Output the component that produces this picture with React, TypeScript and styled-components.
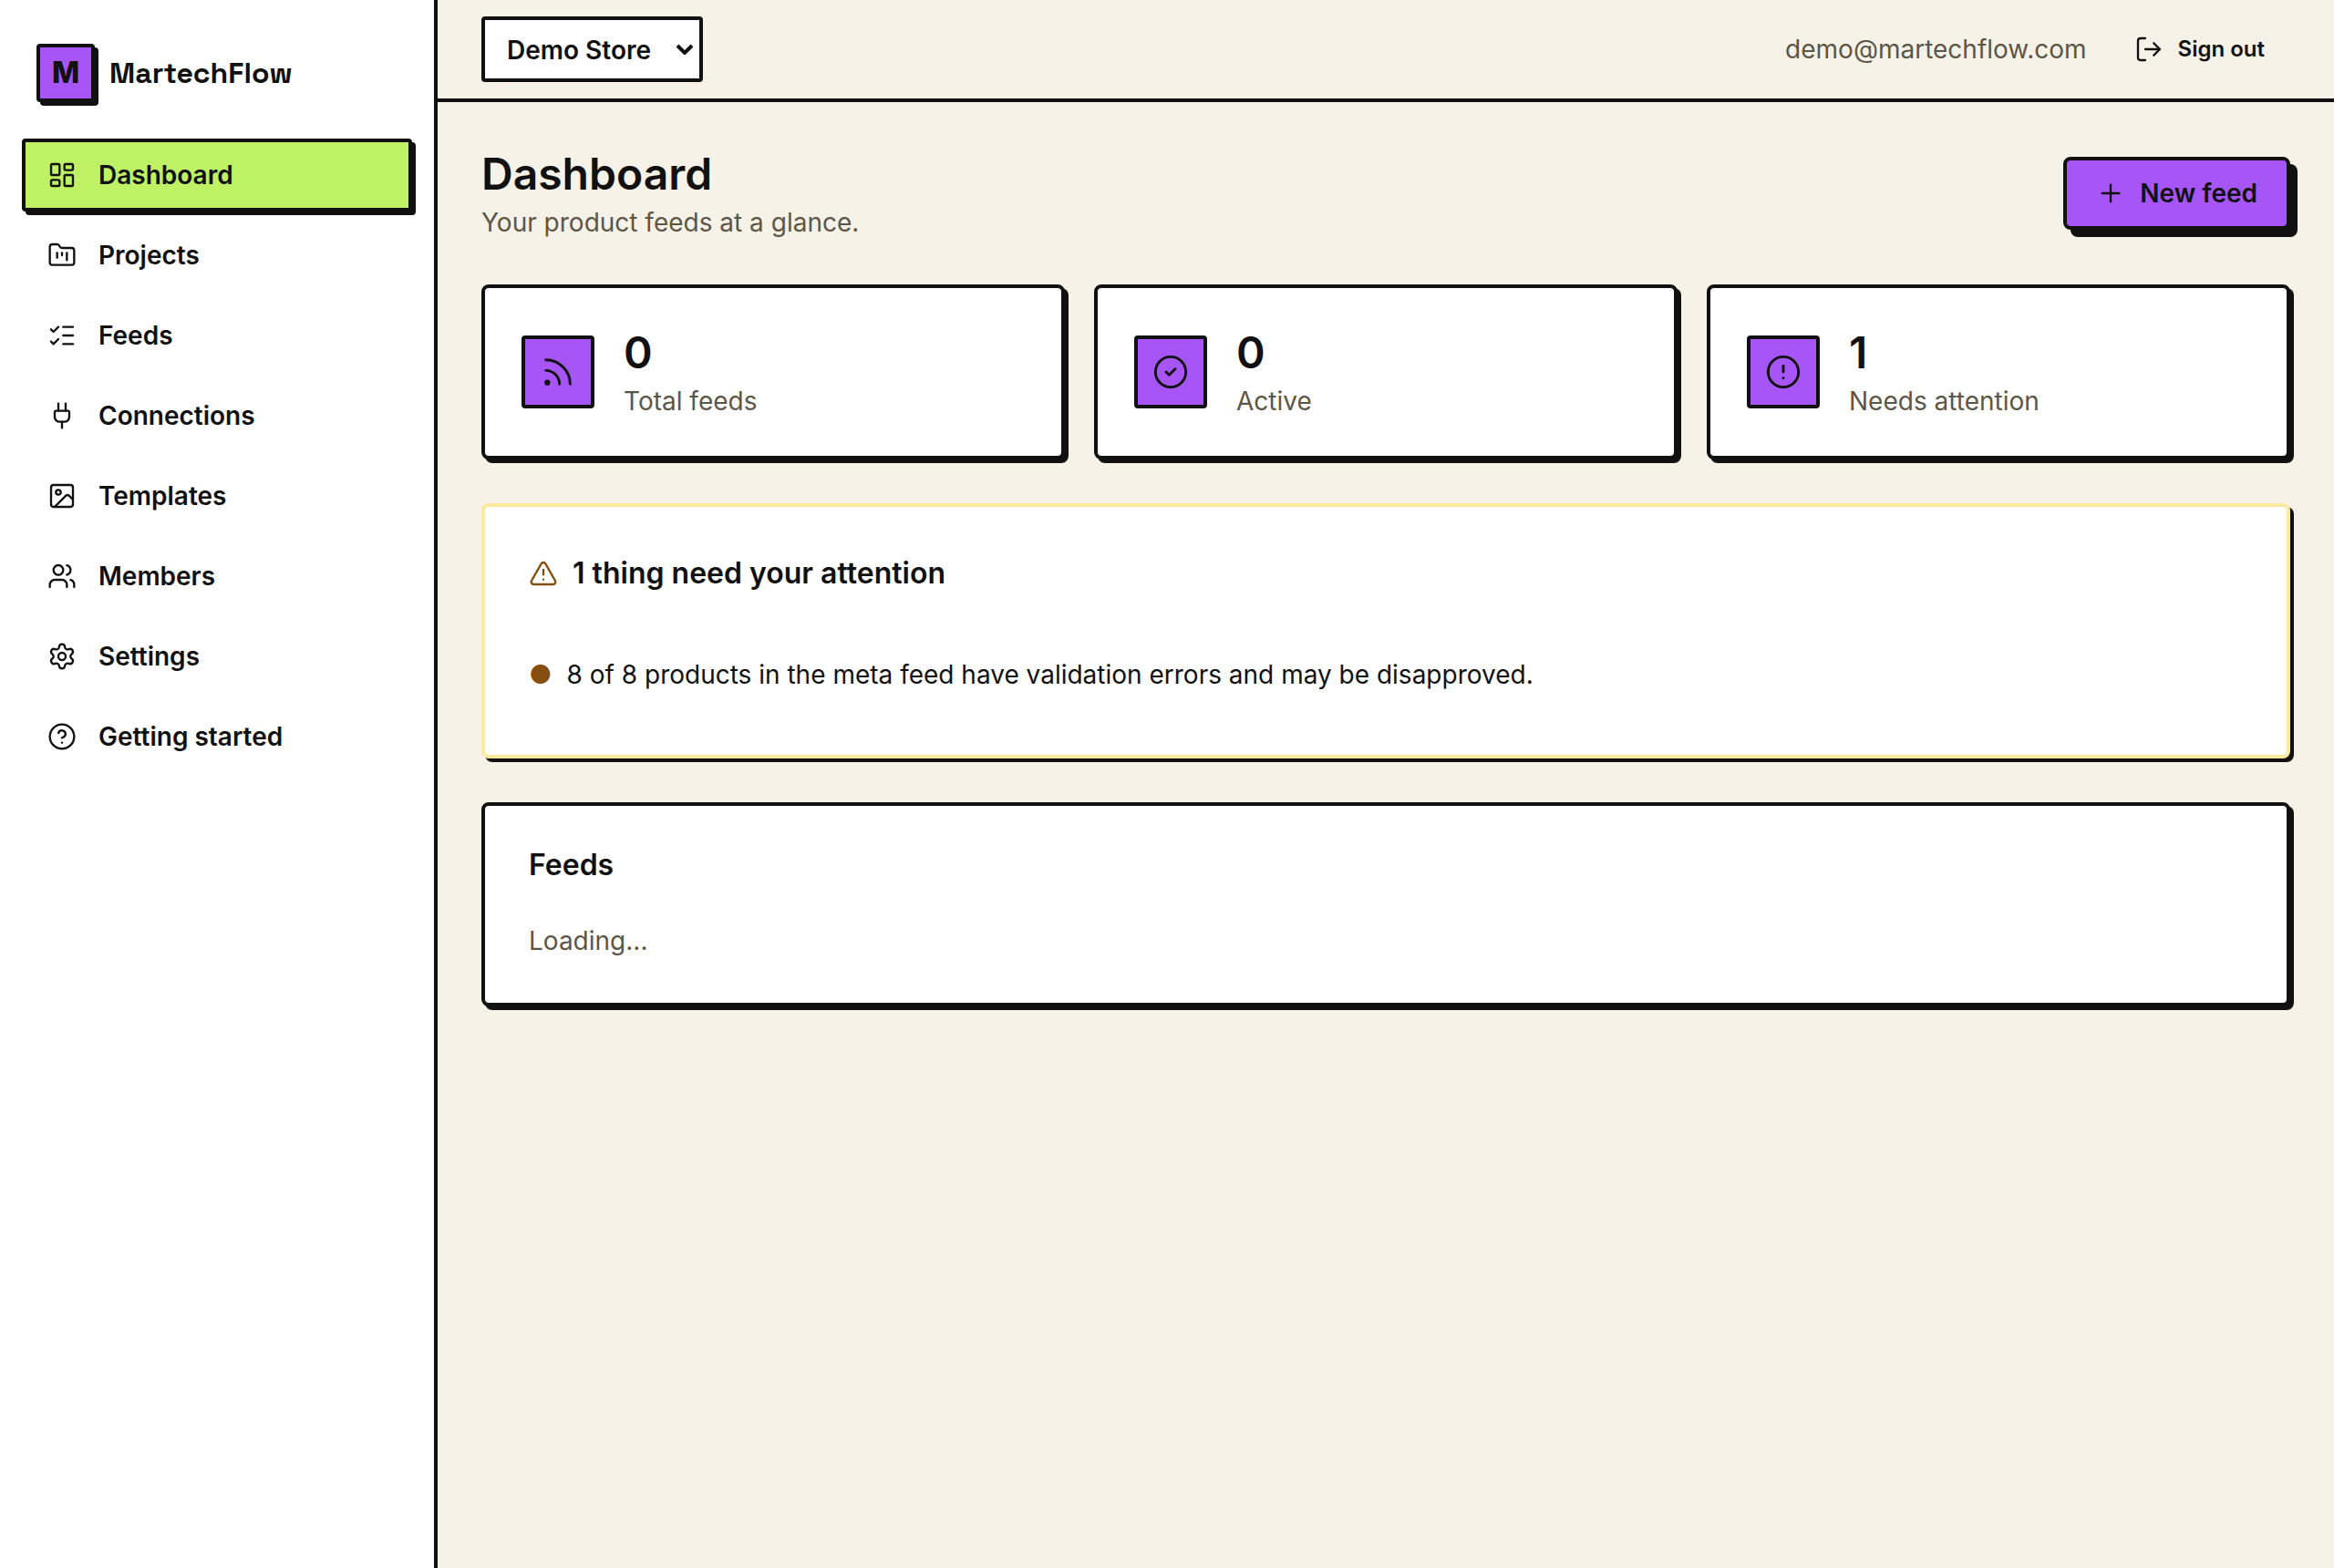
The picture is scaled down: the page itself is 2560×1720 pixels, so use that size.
import React from "react";
import styled, { createGlobalStyle } from "styled-components";
import {
  CircleAlert,
  CircleCheck,
  CircleHelp,
  FolderKanban,
  Image,
  LayoutDashboard,
  ListChecks,
  LogOut,
  Plug,
  Plus,
  Rss,
  Settings,
  TriangleAlert,
  Users,
  type LucideIcon,
} from "lucide-react";

const ink = "#111111";
const paper = "#f7f2e7";
const white = "#ffffff";
const purple = "#a855f7";
const lime = "#bef264";
const muted = "#5c5647";
const warning = "#854d0e";
const warningBorder = "#fdea9e";
const bodyFont = 'Inter, "Liberation Sans", sans-serif';

const GlobalStyle = createGlobalStyle`
  *, *::before, *::after { box-sizing: border-box; }
  body {
    margin: 0;
    background: ${paper};
    color: ${ink};
    font-family: ${bodyFont};
    font-size: 28px;
    line-height: 40px;
  }
  h1, h2, p, ul { margin: 0; padding: 0; }
  ul { list-style: none; }
  button, select { font: inherit; color: inherit; }
  svg { flex: none; }
`;

const Shell = styled.div`
  display: grid;
  grid-template-columns: 480px minmax(0, 1fr);
  min-height: 100vh;
`;

const Sidebar = styled.aside`
  display: flex;
  flex-direction: column;
  gap: 40px;
  padding: 48px 24px;
  background: ${white};
  border-right: 4px solid ${ink};
`;

const Brand = styled.a`
  display: flex;
  align-items: center;
  gap: 16px;
  padding: 0 16px;
  color: ${ink};
  font-family: "Space Grotesk", ${bodyFont};
  font-size: 32px;
  font-weight: 700;
  text-decoration: none;
`;

const BrandMark = styled.span`
  display: grid;
  place-items: center;
  width: 64px;
  height: 64px;
  border: 4px solid ${ink};
  border-radius: 4px;
  background: ${purple};
  box-shadow: 4px 4px 0 ${ink};
  font-family: ${bodyFont};
  font-weight: 800;
`;

const Nav = styled.nav`
  display: flex;
  flex-direction: column;
  gap: 8px;
`;

const NavLink = styled.a<{ $active?: boolean }>`
  display: flex;
  align-items: center;
  gap: 24px;
  height: 80px;
  padding: 0 24px;
  border: 4px solid ${(p) => (p.$active ? ink : "transparent")};
  border-radius: 4px;
  background: ${(p) => (p.$active ? lime : "transparent")};
  box-shadow: ${(p) => (p.$active ? `4px 4px 0 ${ink}` : "none")};
  color: ${ink};
  font-weight: 600;
  text-decoration: none;
`;

const Page = styled.div`
  display: flex;
  flex-direction: column;
`;

const TopBar = styled.header`
  display: flex;
  align-items: center;
  justify-content: space-between;
  height: 112px;
  padding: 0 48px;
  border-bottom: 4px solid ${ink};
`;

const StorePicker = styled.label`
  display: grid;
  align-items: center;
`;

const StoreSelect = styled.select`
  grid-area: 1 / 1;
  height: 72px;
  padding: 2px 52px 0 24px;
  border: 4px solid ${ink};
  border-radius: 4px;
  background: ${white};
  font-weight: 600;
  appearance: none;
`;

const SelectArrow = styled.svg`
  grid-area: 1 / 1;
  justify-self: end;
  width: 20px;
  height: 12px;
  margin-right: 10px;
  pointer-events: none;
`;

const Account = styled.div`
  display: flex;
  align-items: center;
  gap: 24px;
  color: ${muted};
`;

const SignOutButton = styled.button`
  display: flex;
  align-items: center;
  gap: 16px;
  height: 64px;
  padding: 0 24px;
  border: 4px solid transparent;
  background: none;
  color: ${ink};
  font-size: 24px;
  font-weight: 600;
  cursor: pointer;
`;

const Main = styled.main`
  display: flex;
  flex-direction: column;
  gap: 48px;
  padding: 48px;
`;

const PageHeader = styled.div`
  display: flex;
  align-items: center;
  justify-content: space-between;
`;

const Stack = styled.div`
  display: flex;
  flex-direction: column;
  gap: 2px;
`;

const PageTitle = styled.h1`
  font-size: 48px;
  font-weight: 600;
  line-height: 62px;
`;

const MutedText = styled.p`
  color: ${muted};
`;

const PrimaryButton = styled.button`
  display: flex;
  align-items: center;
  gap: 16px;
  height: 80px;
  padding: 0 32px;
  border: 4px solid ${ink};
  border-radius: 8px;
  background: ${purple};
  box-shadow: 8px 8px 0 ${ink};
  font-weight: 600;
  cursor: pointer;
`;

const StatGrid = styled.section`
  display: grid;
  grid-template-columns: repeat(3, minmax(0, 1fr));
  gap: 32px;
`;

const Card = styled.section<{ $warning?: boolean }>`
  display: flex;
  flex-direction: column;
  gap: 46px;
  padding: 48px;
  border: 4px solid ${(p) => (p.$warning ? warningBorder : ink)};
  border-radius: 8px;
  background: ${white};
  box-shadow: 4px 4px 0 ${ink};
`;

const StatCard = styled(Card).attrs({ as: "div" })`
  flex-direction: row;
  align-items: center;
  gap: 32px;
  padding: 40px;
`;

const StatIcon = styled.span`
  display: grid;
  place-items: center;
  width: 80px;
  height: 80px;
  border: 4px solid ${ink};
  border-radius: 4px;
  background: ${purple};
`;

const StatValue = styled.p`
  font-size: 48px;
  font-weight: 600;
  line-height: 62px;
`;

const CardTitle = styled.h2`
  font-size: 32px;
  font-weight: 600;
  line-height: 34px;
`;

const AlertTitle = styled(CardTitle)`
  display: flex;
  align-items: center;
  gap: 16px;
  padding: 8px 0;
`;

const AlertRow = styled.li`
  display: flex;
  align-items: center;
  gap: 16px;
  padding: 20px 0;
`;

const AlertDot = styled.span`
  color: ${warning};
`;

const navItems: { label: string; icon: LucideIcon }[] = [
  { label: "Dashboard", icon: LayoutDashboard },
  { label: "Projects", icon: FolderKanban },
  { label: "Feeds", icon: ListChecks },
  { label: "Connections", icon: Plug },
  { label: "Templates", icon: Image },
  { label: "Members", icon: Users },
  { label: "Settings", icon: Settings },
  { label: "Getting started", icon: CircleHelp },
];

const stats: { label: string; value: number; icon: LucideIcon }[] = [
  { label: "Total feeds", value: 0, icon: Rss },
  { label: "Active", value: 0, icon: CircleCheck },
  { label: "Needs attention", value: 1, icon: CircleAlert },
];

export default function App() {
  return (
    <>
      <GlobalStyle />
      <Shell>
        <Sidebar>
          <Brand href="#">
            <BrandMark>M</BrandMark>
            MartechFlow
          </Brand>
          <Nav>
            {navItems.map(({ label, icon: Icon }, i) => (
              <NavLink key={label} href="#" $active={i === 0}>
                <Icon size={32} strokeWidth={1.75} />
                {label}
              </NavLink>
            ))}
          </Nav>
        </Sidebar>
        <Page>
          <TopBar>
            <StorePicker>
              <StoreSelect aria-label="Store" defaultValue="demo">
                <option value="demo">Demo Store</option>
              </StoreSelect>
              <SelectArrow viewBox="0 0 20 12" fill="none" stroke={ink} strokeWidth="4">
                <path d="M2 2l8 8 8-8" />
              </SelectArrow>
            </StorePicker>
            <Account>
              <span>demo@martechflow.com</span>
              <SignOutButton type="button">
                <LogOut size={32} strokeWidth={1.75} />
                Sign out
              </SignOutButton>
            </Account>
          </TopBar>
          <Main>
            <PageHeader>
              <Stack>
                <PageTitle>Dashboard</PageTitle>
                <MutedText>Your product feeds at a glance.</MutedText>
              </Stack>
              <PrimaryButton type="button">
                <Plus size={32} strokeWidth={1.75} />
                New feed
              </PrimaryButton>
            </PageHeader>
            <StatGrid>
              {stats.map(({ label, value, icon: Icon }) => (
                <StatCard key={label}>
                  <StatIcon>
                    <Icon size={40} strokeWidth={1.75} />
                  </StatIcon>
                  <Stack>
                    <StatValue>{value}</StatValue>
                    <MutedText>{label}</MutedText>
                  </Stack>
                </StatCard>
              ))}
            </StatGrid>
            <Card $warning>
              <AlertTitle>
                <TriangleAlert size={32} strokeWidth={1.75} color={warning} />
                1 thing need your attention
              </AlertTitle>
              <ul>
                <AlertRow>
                  <AlertDot>●</AlertDot>
                  8 of 8 products in the meta feed have validation errors and may be disapproved.
                </AlertRow>
              </ul>
            </Card>
            <Card>
              <CardTitle>Feeds</CardTitle>
              <MutedText>Loading...</MutedText>
            </Card>
          </Main>
        </Page>
      </Shell>
    </>
  );
}
